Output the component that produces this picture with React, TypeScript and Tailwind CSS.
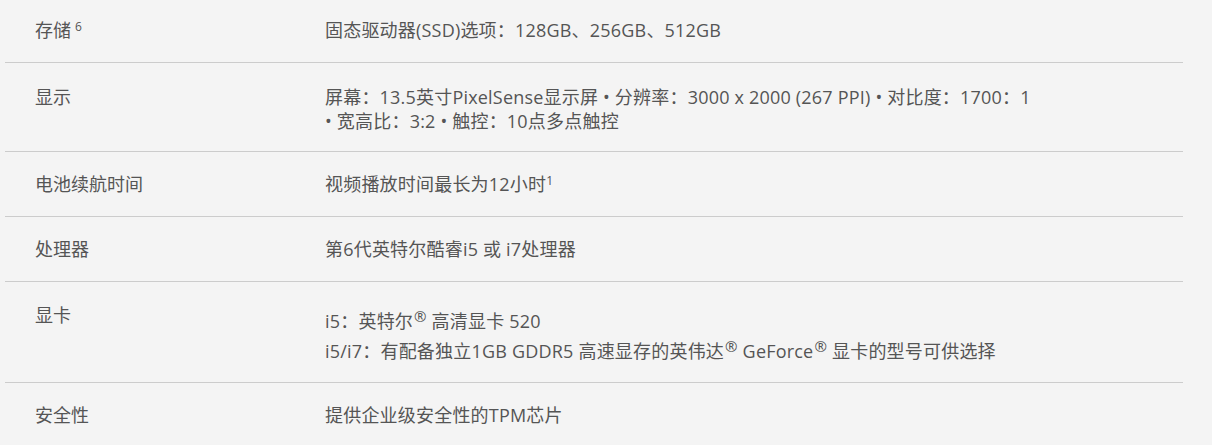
const font = { fontFamily: '"Open Sans", "Noto Sans CJK SC", sans-serif' }

type Row = { label: React.ReactNode; value: React.ReactNode; cls?: string }

const Reg = () => <sup className="text-[15px] ml-[1px] -top-[6px]">®</sup>

const rows: Row[] = [
    {
        label: <>存储<sup className="ml-[4px] text-[12px] -top-[6px]">6</sup></>,
        value: <>固态驱动器(SSD)选项：128GB、256GB、512GB</>,
        cls: "pt-[18px] pb-[20px]",
    },
    {
        label: "显示",
        value: <>屏幕：13.5英寸PixelSense显示屏 • 分辨率：3000 x 2000 (267 PPI) • 对比度：1700：1<br/>• 宽高比：3:2 • 触控：10点多点触控</>,
        cls: "pt-[22px] pb-[18px]",
    },
    {
        label: "电池续航时间",
        value: <>视频播放时间最长为12小时<sup className="text-[12px] -top-[6px]">1</sup></>,
        cls: "pt-[20px] pb-[20px]",
    },
    {
        label: "处理器",
        value: "第6代英特尔酷睿i5 或 i7处理器",
        cls: "pt-[20px] pb-[20px]",
    },
    {
        label: "显卡",
        value: (
            <div className="pt-[3px] leading-[30px]">
                <p>i5：英特尔<Reg/> 高清显卡 520</p>
                <p>i5/i7：有配备独立1GB GDDR5 高速显存的英伟达<Reg/> GeForce<Reg/> 显卡的型号可供选择</p>
            </div>
        ),
        cls: "pt-[21px] pb-[16px]",
    },
    {
        label: "安全性",
        value: "提供企业级安全性的TPM芯片",
        cls: "pt-[20px] pb-[20px]",
    },
]

export default function App() {
    return (
        <div className="min-h-[445px] bg-[#f4f4f4] text-[#555] text-[18px] leading-[24px]" style={font}>
            <div className="w-[1178px] ml-[5px]">
                {rows.map((r, i) => (
                    <div
                        key={i}
                        className={`flex ${r.cls} ${i < rows.length - 1 ? "border-b border-[#cccccc]" : ""}`}
                    >
                        <div className="w-[320px] pl-[30px] shrink-0">{r.label}</div>
                        <div className="flex-1 tracking-[0.2px]">{r.value}</div>
                    </div>
                ))}
            </div>
        </div>
    )
}
